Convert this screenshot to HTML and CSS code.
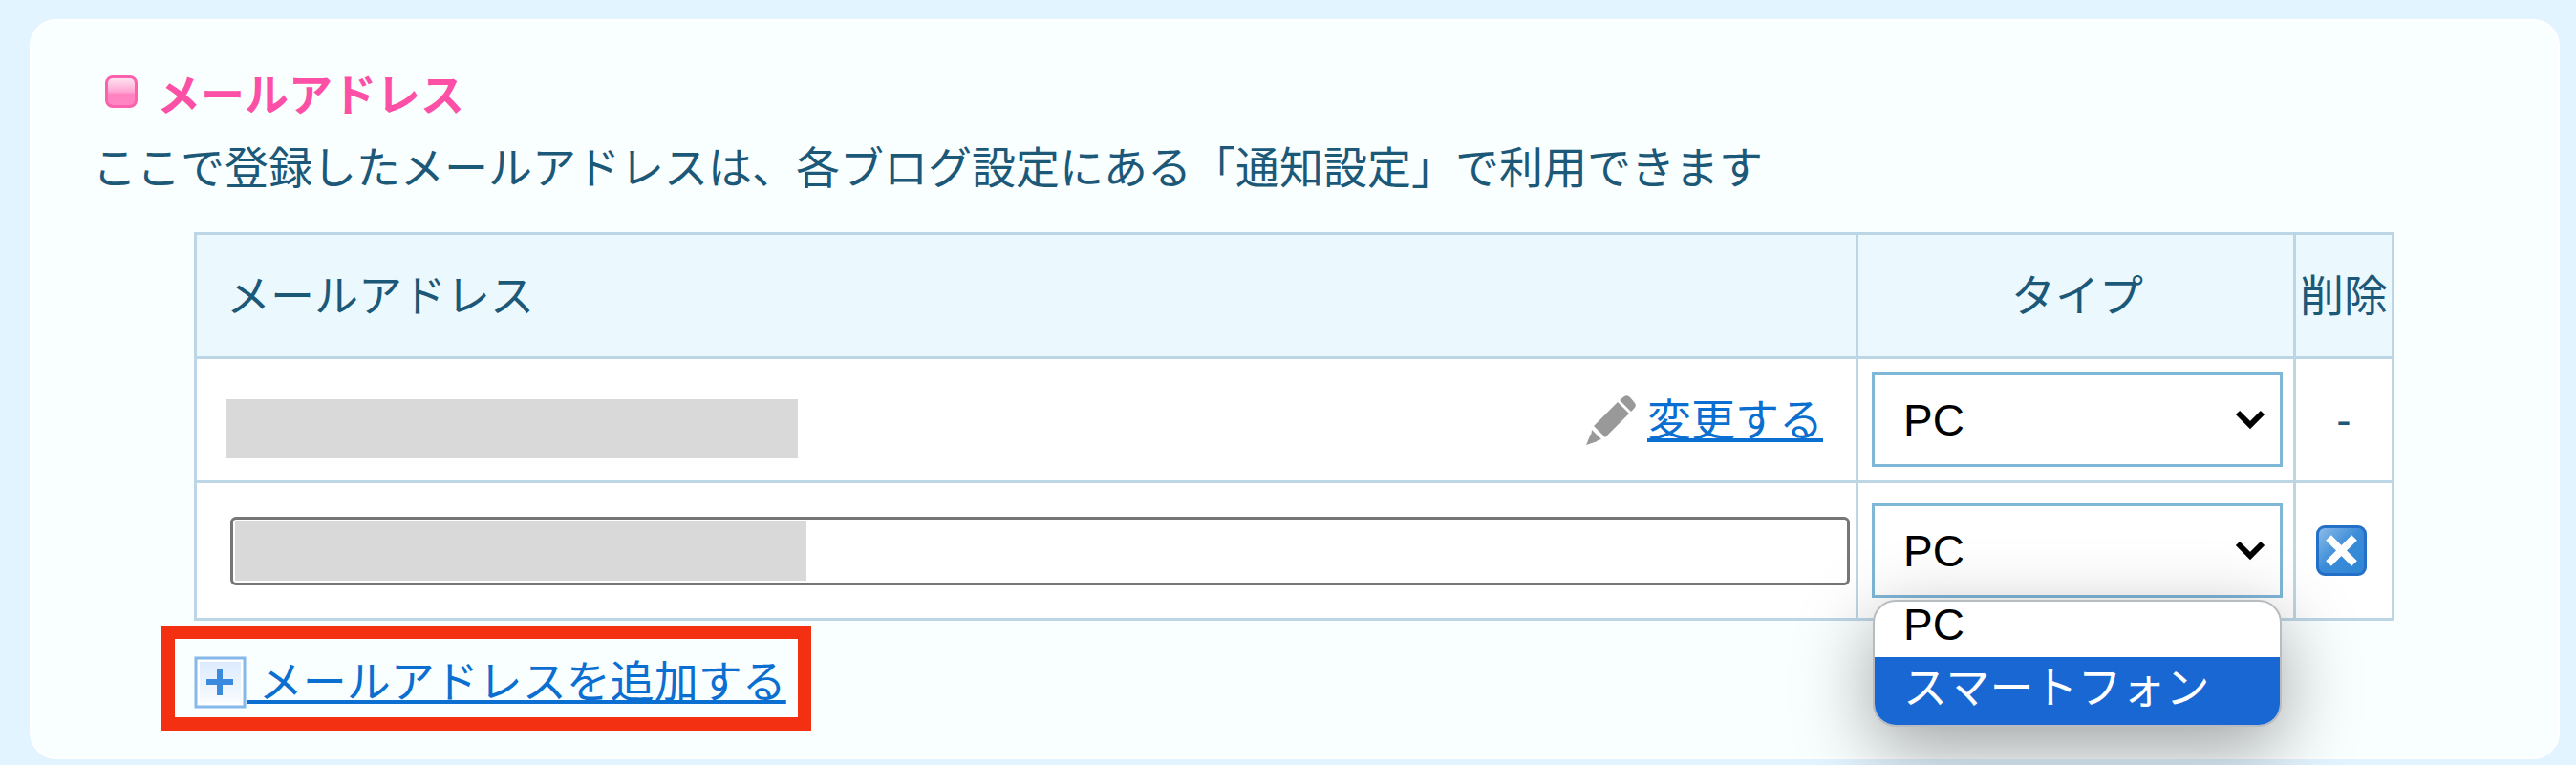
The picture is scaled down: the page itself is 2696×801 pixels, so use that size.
FILE: index.html
```
<!DOCTYPE html>
<html lang="ja">
<head>
    <meta charset="UTF-8">
    <title>メールアドレス</title>
    <link rel="stylesheet" href="styles.css">
</head>
<body>
    <div class="card">

        <h2 class="heading"><span class="bullet"></span>メールアドレス</h2>
        <p class="description">ここで登録したメールアドレスは、各ブログ設定にある「通知設定」で利用できます</p>

        <div class="content">
            <table class="mail-table">
                <thead>
                    <tr>
                        <th class="mail-col">メールアドレス</th>
                        <th class="type-col">タイプ</th>
                        <th class="delete-col">削除</th>
                    </tr>
                </thead>
                <tbody>
                    <tr>
                        <td class="mail-col">
                            <div class="mail-row">
                                <span class="mask"></span>
                                <a href="#" class="edit-link">
                                    <svg class="pencil" viewBox="0 0 52 52" aria-hidden="true">
                                        <path fill="#999" d="M40 1 Q43 -1 46 2 L51 8 Q53 11 50 14 L47 17 L35 5 Z"/>
                                        <path fill="#999" d="M33 7 L45 19 L20 44 L8 32 Z"/>
                                        <path fill="#999" d="M6 36 L16 46 L9 48 L5 44 Z"/>
                                        <path fill="#999" d="M5 40 L12 48 L0 52 Z"/>
                                    </svg>
                                    <span class="link-text">変更する</span>
                                </a>
                            </div>
                        </td>
                        <td class="type-col">
                            <div class="select-box">
                                <select class="type-select" aria-label="タイプ">
                                    <option>PC</option>
                                    <option>スマートフォン</option>
                                </select>
                                <svg class="arrow" viewBox="0 0 32 22" aria-hidden="true">
                                    <path d="M3 4 L16 17 L29 4" fill="none" stroke="#000" stroke-width="6"/>
                                </svg>
                            </div>
                        </td>
                        <td class="delete-col">-</td>
                    </tr>
                    <tr class="edit-row">
                        <td class="mail-col">
                            <div class="input-row">
                                <input type="text" class="mail-input" aria-label="メールアドレス">
                            </div>
                        </td>
                        <td class="type-col">
                            <div class="select-box">
                                <select class="type-select" aria-label="タイプ">
                                    <option>PC</option>
                                    <option>スマートフォン</option>
                                </select>
                                <svg class="arrow" viewBox="0 0 32 22" aria-hidden="true">
                                    <path d="M3 4 L16 17 L29 4" fill="none" stroke="#000" stroke-width="6"/>
                                </svg>
                                <ul class="menu" role="listbox" aria-label="タイプ">
                                    <li role="option" aria-selected="false">PC</li>
                                    <li class="selected" role="option" aria-selected="true">スマートフォン</li>
                                </ul>
                            </div>
                        </td>
                        <td class="delete-col">
                            <button type="button" class="delete-button" aria-label="削除">
                                <svg viewBox="0 0 47 47" aria-hidden="true">
                                    <path d="M10 10 L37 37 M37 10 L10 37" fill="none" stroke="#fff" stroke-width="8"/>
                                </svg>
                            </button>
                        </td>
                    </tr>
                </tbody>
            </table>

            <div class="add-box">
                <a href="#" class="add-link">
                    <svg class="plus" viewBox="0 0 55 55" aria-hidden="true">
                        <defs>
                            <linearGradient id="plus-bg" x1="0" y1="0" x2="0" y2="1">
                                <stop offset="0" stop-color="#dcebfd"/>
                                <stop offset="1" stop-color="#fafcff"/>
                            </linearGradient>
                        </defs>
                        <rect x="2" y="2" width="51" height="51" fill="#fff" stroke="#86b8ea" stroke-width="3"/>
                        <rect x="6" y="6" width="43" height="43" fill="url(#plus-bg)"/>
                        <path d="M27 13 V41 M13 27 H41" fill="none" stroke="#3a8ade" stroke-width="6"/>
                    </svg>
                    <span class="link-text">&nbsp;メールアドレスを追加する</span>
                </a>
            </div>
        </div>

    </div>
</body>
</html>
```
FILE: styles.css
```
* {
    box-sizing: border-box;
}

body {
    margin: 0;
    padding: 20px 17px 6px 31px;
    background-color: #e2f4ff;
    color: #1c5878;
    font-family: "Liberation Sans", "Noto Sans CJK JP", sans-serif;
    font-size: 46px;
    line-height: 76px;
}

.card {
    padding: 40px 64px 28px;
    background-color: #f9feff;
    border: 2px solid #fff;
    border-radius: 28px;
}

.heading {
    display: flex;
    align-items: center;
    gap: 20px;
    margin: 0;
    padding-left: 13px;
    color: #fb50a6;
    font-size: 46px;
    font-weight: bold;
}

.bullet {
    width: 34px;
    height: 34px;
    margin-bottom: 8px;
    border: 3px solid #fb62ae;
    border-radius: 8px;
    background: linear-gradient(#fde3f0, #ffa6d2 50%, #ff82c0 60%, #ff86c2);
}

.description {
    margin: 0;
}

.content {
    margin: 29px 107px 0 106px;
}

/* table */
.mail-table {
    width: 100%;
    table-layout: fixed;
    border-collapse: collapse;
    background-color: #fff;
}

.mail-table th,
.mail-table td {
    height: 130px;
    padding: 0;
    border: 3px solid #bdd6e6;
    text-align: center;
    font-weight: normal;
}

.mail-table th {
    background-color: #ebf8fe;
}

.mail-table .edit-row td {
    height: 144px;
}

.mail-table .mail-col {
    padding: 0 6px 0 31px;
    text-align: left;
}

.mail-table .type-col {
    width: 458px;
    padding: 0 11px 0 14px;
}

.mail-table .delete-col {
    width: 103px;
}

.mail-row {
    display: flex;
    align-items: flex-end;
    justify-content: space-between;
    height: 80px;
    padding-right: 28px;
}

.mask {
    width: 598px;
    height: 62px;
    background-color: #d9d9d9;
}

.edit-link,
.add-link {
    display: flex;
    align-items: center;
    color: #0a6fd0;
    text-decoration: none;
    white-space: nowrap;
}

.edit-link {
    gap: 12px;
    line-height: 80px;
}

.link-text {
    text-decoration: underline;
    text-decoration-thickness: 4px;
    text-decoration-skip-ink: none;
    text-underline-offset: 3px;
}

.pencil {
    width: 52px;
    height: 52px;
}

.input-row {
    display: flex;
    padding-left: 4px;
}

.mail-input {
    width: 100%;
    height: 72px;
    padding: 2px;
    border: 3px solid #767676;
    border-radius: 6px;
    background: linear-gradient(#d9d9d9, #d9d9d9) no-repeat content-box;
    background-size: 598px 100%;
    font: inherit;
}

/* type drop-down */
.select-box {
    position: relative;
    display: flex;
}

.type-select {
    width: 100%;
    height: 99px;
    padding: 0 30px;
    appearance: none;
    border: 3px solid #7fb7d9;
    border-radius: 0;
    background-color: #fff;
    color: #000;
    font: inherit;
}

.arrow {
    position: absolute;
    top: 38px;
    right: 18px;
    width: 32px;
    height: 22px;
    pointer-events: none;
}

.menu {
    position: absolute;
    top: 101px;
    left: 1px;
    right: 1px;
    z-index: 1;
    margin: 0;
    padding: 0;
    overflow: hidden;
    list-style: none;
    text-align: left;
    color: #000;
    background-color: #fff;
    border: 2px solid #b9bcbe;
    border-radius: 24px;
    box-shadow: 0 24px 80px rgba(0, 0, 0, 0.36);
}

.menu li {
    height: 58px;
    padding-left: 30px;
    line-height: 48px;
}

.menu .selected {
    height: 71px;
    line-height: 64px;
    color: #fff;
    background-color: #1967d2;
}

.delete-button {
    display: block;
    width: 53px;
    height: 53px;
    margin: 0 21px;
    padding: 0;
    border: 3px solid #2470c8;
    border-radius: 9px;
    background: linear-gradient(135deg, #8bbbe8, #3a8bd8 50%, #2f86d4);
}

.delete-button svg {
    display: block;
    width: 100%;
}

.add-box {
    width: fit-content;
    height: 110px;
    margin: 5px 0 0 -34px;
    padding: 8px 12px 0 20px;
    border: 14px solid #f33012;
}

.add-link {
    height: 74px;
}

.plus {
    flex-shrink: 0;
    width: 55px;
    height: 55px;
}
```
